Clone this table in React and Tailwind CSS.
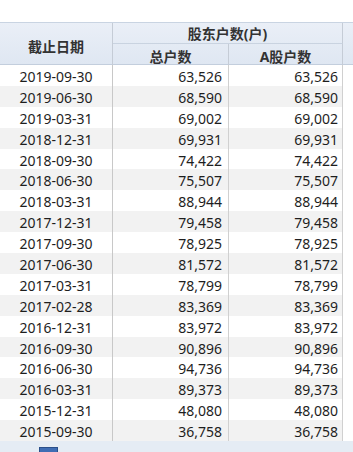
import React from "react";

const rows = [
  ["2019-09-30", "63,526", "63,526"],
  ["2019-06-30", "68,590", "68,590"],
  ["2019-03-31", "69,002", "69,002"],
  ["2018-12-31", "69,931", "69,931"],
  ["2018-09-30", "74,422", "74,422"],
  ["2018-06-30", "75,507", "75,507"],
  ["2018-03-31", "88,944", "88,944"],
  ["2017-12-31", "79,458", "79,458"],
  ["2017-09-30", "78,925", "78,925"],
  ["2017-06-30", "81,572", "81,572"],
  ["2017-03-31", "78,799", "78,799"],
  ["2017-02-28", "83,369", "83,369"],
  ["2016-12-31", "83,972", "83,972"],
  ["2016-09-30", "90,896", "90,896"],
  ["2016-06-30", "94,736", "94,736"],
  ["2016-03-31", "89,373", "89,373"],
  ["2015-12-31", "48,080", "48,080"],
  ["2015-09-30", "36,758", "36,758"],
];

export default function App() {
  return (
    <div
      className="w-[353px] h-[452px] overflow-hidden bg-white text-[#1e1e1e]"
      style={{ fontFamily: '"Noto Sans", "Noto Sans CJK SC", sans-serif' }}
    >
      <div className="h-[22px]" />
      {/* header */}
      <div className="grid grid-cols-[113px_116px_114px_1fr] h-[43px] bg-gradient-to-b from-[#eaeff7] to-[#dfe7f2] border-t border-[#c9d4e2] border-b border-b-[#c3cedd] text-[14px] font-bold text-[#333]">
        <div className="row-span-2 flex items-center justify-center border-r border-[#c5ccd6] pt-[2px]">
          截止日期
        </div>
        <div className="col-span-2 flex items-center justify-center border-r border-[#c5ccd6] border-b border-b-[#c9d3e0] h-[21px]">
          股东户数(户)
        </div>
        <div className="row-span-2" />
        <div className="flex items-center justify-center border-r border-[#c5ccd6] pt-[2px]">
          总户数
        </div>
        <div className="flex items-center justify-center border-r border-[#c5ccd6] pt-[2px]">
          A股户数
        </div>
      </div>
      {/* body */}
      <div className="flex flex-col">
        {rows.map((r, i) => (
          <div
            key={i}
            className="grid grid-cols-[113px_116px_114px_1fr] h-[20.9px] text-[14px] leading-none"
          >
            <div
              className={`flex items-center justify-center border-r border-[#c8c8c8] pt-[3px] ${
                i % 2 === 1 ? "bg-[#f2f2f2]" : "bg-white"
              }`}
            >
              {r[0]}
            </div>
            <div
              className={`flex items-center justify-end pr-[6px] border-r border-[#d0d0d0] pt-[3px] ${
                i % 2 === 1 ? "bg-[#f2f2f2]" : "bg-white"
              }`}
            >
              {r[1]}
            </div>
            <div
              className={`flex items-center justify-end pr-[4px] border-r border-[#d0d0d0] pt-[3px] ${
                i % 2 === 1 ? "bg-[#f2f2f2]" : "bg-white"
              }`}
            >
              {r[2]}
            </div>
            <div className="bg-white" />
          </div>
        ))}
      </div>
      {/* bottom bar */}
      <div className="h-[12px] bg-[#e5ecf4] relative">
        <div className="absolute left-[39px] top-[6px] w-[19px] h-[8px] bg-[#3f6db4] border border-[#2a4f8a]" />
      </div>
    </div>
  );
}
